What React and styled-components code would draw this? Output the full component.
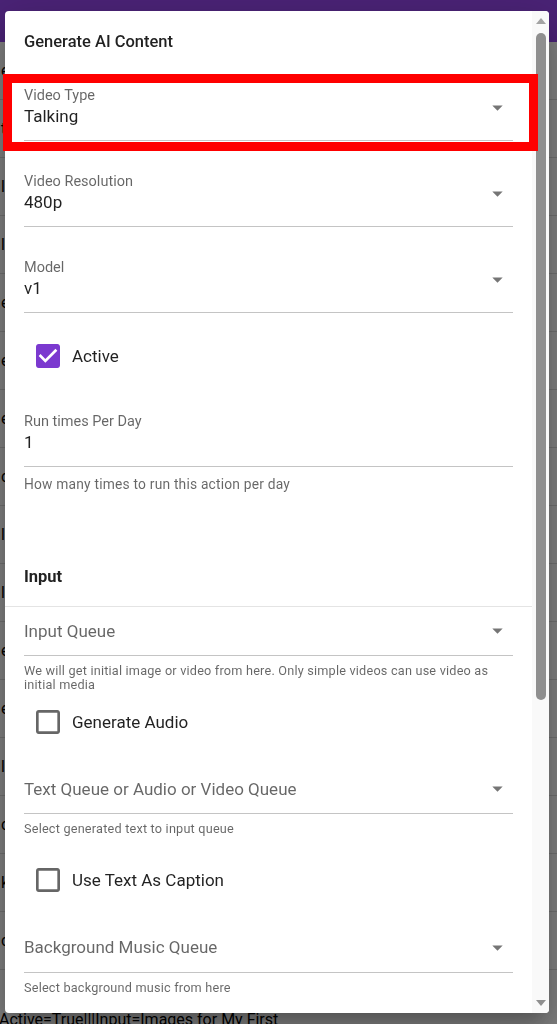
import React from "react";
import styled, { createGlobalStyle } from "styled-components";

const GlobalStyle = createGlobalStyle`
  * { box-sizing: border-box; }
  html, body { margin: 0; padding: 0; }
  body {
    font-family: Roboto, "Helvetica Neue", Arial, sans-serif;
    background: #fff;
    overflow: hidden;
  }
`;

/* ---------- page underneath the modal ---------- */
const Page = styled.div`
  width: 557px;
  height: 1024px;
  overflow: hidden;
  display: flex;
  flex-direction: column;
  background: #fff;
`;
const AppBar = styled.header`
  height: 42px;
  flex: none;
  background: #9546ec;
`;
const BgRows = styled.div`
  height: 968px;
  flex: none;
  display: flex;
  flex-direction: column;
  overflow: hidden;
`;
const BgRow = styled.div`
  height: 58px;
  flex: none;
  display: flex;
  align-items: center;
  border-bottom: 1px solid #dcdcdc;
  padding-left: 1px;
  font-size: 16px;
  color: #000;
  white-space: nowrap;
`;
const BgLine = styled.div`
  font-size: 16px;
  line-height: 20px;
  color: #000;
  white-space: nowrap;
  margin-left: -1px;
`;

/* ---------- modal ---------- */
const Backdrop = styled.div`
  position: fixed;
  inset: 0;
  background: rgba(0, 0, 0, 0.5);
`;
const Paper = styled.div`
  position: fixed;
  top: 11px;
  left: 5px;
  width: 544px;
  height: 1002px;
  display: flex;
  background: #fff;
  border-radius: 4px;
  overflow: hidden;
  box-shadow: 0 11px 15px -7px rgba(0, 0, 0, 0.2),
    0 24px 38px 3px rgba(0, 0, 0, 0.14), 0 9px 46px 8px rgba(0, 0, 0, 0.12);
`;
const Content = styled.div`
  width: 527px;
  flex: none;
  display: flex;
  flex-direction: column;
  overflow: hidden;
`;
const ScrollBar = styled.div`
  flex: 1;
  display: flex;
  flex-direction: column;
  align-items: center;
  padding: 7px 0 7px;
  background: #f9f9f9;
`;
const ScrollArrow = styled.svg`
  width: 10px;
  height: 6px;
  flex: none;
  fill: ${(p) => (p.$dim ? "#a3a3a3" : "#8f8f8f")};
`;
const ScrollThumb = styled.div`
  width: 10px;
  height: 667px;
  margin-top: 9px;
  flex: none;
  border-radius: 5px;
  background: #8f8f8f;
`;
const ScrollSpacer = styled.div`
  flex: 1;
`;

const Title = styled.h2`
  margin: 0;
  padding: 19px 19px 0;
  font-size: 16.5px;
  font-weight: 500;
  line-height: 24px;
  color: rgba(0, 0, 0, 0.87);
`;
const Section = styled.div`
  display: flex;
  flex-direction: column;
  padding: 0 19px;
`;
const SectionHeader = styled.h3`
  margin: ${(p) => p.$mt}px 0 0;
  padding: 0 19px 17px;
  font-size: 16.5px;
  font-weight: 700;
  line-height: 24px;
  color: rgba(0, 0, 0, 0.87);
  border-bottom: 1px solid #e4e4e4;
`;

const FieldBox = styled.div`
  margin-top: ${(p) => p.$mt}px;
  padding-bottom: 12px;
  border-bottom: 1px solid #c4c4c4;
`;
const FieldRow = styled.div`
  display: flex;
  align-items: center;
`;
const FieldText = styled.div`
  flex: 1;
  display: flex;
  flex-direction: column;
  min-width: 0;
`;
const Label = styled.div`
  font-size: 14.5px;
  line-height: 16px;
  margin-top: 1px;
  color: rgba(0, 0, 0, 0.6);
  white-space: nowrap;
`;
const Value = styled.div`
  font-size: 17px;
  line-height: 24px;
  color: ${(p) => (p.$placeholder ? "rgba(0,0,0,0.6)" : "rgba(0,0,0,0.87)")};
  white-space: nowrap;
`;
const Arrow = styled.svg`
  width: 25px;
  height: 25px;
  flex: none;
  margin-right: 3px;
  fill: rgba(0, 0, 0, 0.54);
`;
const Helper = styled.div`
  margin-top: ${(p) => (p.$large ? 9 : 8)}px;
  font-size: ${(p) => (p.$large ? 13.8 : 12.7)}px;
  line-height: ${(p) => (p.$large ? 16 : 13.5)}px;
  letter-spacing: 0.2px;
  color: rgba(0, 0, 0, 0.6);
`;

const CheckRow = styled.label`
  display: flex;
  align-items: center;
  gap: 12px;
  margin: ${(p) => p.$mt}px 0 0 12px;
  font-size: 17px;
  line-height: 24px;
  color: rgba(0, 0, 0, 0.87);
`;
const CheckIcon = styled.svg`
  width: 24px;
  height: 24px;
  flex: none;
  fill: ${(p) => (p.$checked ? "#7b39cf" : "rgba(0,0,0,0.6)")};
`;

const Annotation = styled.div`
  position: fixed;
  top: 74px;
  left: 3px;
  width: 535px;
  height: 77px;
  border: 9px solid #ff0000;
  pointer-events: none;
`;

function SelectField({ label, value, placeholder, helper, largeHelper, mt, noArrow }) {
  return (
    <>
      <FieldBox $mt={mt}>
        <FieldRow>
          <FieldText>
            {value != null && <Label>{label}</Label>}
            <Value $placeholder={value == null}>
              {value != null ? value : placeholder}
            </Value>
          </FieldText>
          {!noArrow && (
            <Arrow viewBox="0 0 24 24">
              <path d="M7 10l5 5 5-5z" />
            </Arrow>
          )}
        </FieldRow>
      </FieldBox>
      {helper && <Helper $large={largeHelper}>{helper}</Helper>}
    </>
  );
}

function Check({ checked, label, mt }) {
  return (
    <CheckRow $mt={mt}>
      <CheckIcon viewBox="3 3 18 18" $checked={checked}>
        {checked ? (
          <path d="M19 3H5c-1.11 0-2 .9-2 2v14c0 1.1.89 2 2 2h14c1.11 0 2-.9 2-2V5c0-1.1-.89-2-2-2zm-9 14l-5-5 1.41-1.41L10 14.17l7.59-7.59L19 8l-9 9z" />
        ) : (
          <path d="M19 5v14H5V5h14m0-2H5c-1.1 0-2 .9-2 2v14c0 1.1.9 2 2 2h14c1.1 0 2-.9 2-2V5c0-1.1-.9-2-2-2z" />
        )}
      </CheckIcon>
      {label}
    </CheckRow>
  );
}

const bgRows = ["e", "t", "l", "l", "el", "el", "el", "c", "l", "l", "el", "el", "l", "c", "k", "c"];

export default function App() {
  return (
    <>
      <GlobalStyle />
      <Page>
        <AppBar />
        <BgRows>
          {bgRows.map((t, i) => (
            <BgRow key={i}>{t}</BgRow>
          ))}
        </BgRows>
        <BgLine>Active=True|||Input=Images for My First</BgLine>
      </Page>
      <Backdrop />
      <Paper role="dialog">
        <Content>
          <Title>Generate AI Content</Title>
          <Section>
            <SelectField mt={33} label="Video Type" value="Talking" />
            <SelectField mt={32} label="Video Resolution" value="480p" />
            <SelectField mt={32} label="Model" value="v1" />
            <Check mt={31} checked label="Active" />
            <SelectField
              mt={45}
              label="Run times Per Day"
              value="1"
              noArrow
              largeHelper
              helper="How many times to run this action per day"
            />
          </Section>
          <SectionHeader $mt={73}>Input</SectionHeader>
          <Section>
            <SelectField
              mt={11}
              placeholder="Input Queue"
              helper={
                <>
                  We will get initial image or video from here. Only simple videos can use video as
                  <br />
                  initial media
                </>
              }
            />
            <Check mt={19} label="Generate Audio" />
            <SelectField
              mt={42}
              placeholder="Text Queue or Audio or Video Queue"
              helper="Select generated text to input queue"
            />
            <Check mt={32} label="Use Text As Caption" />
            <SelectField
              mt={43}
              placeholder="Background Music Queue"
              helper="Select background music from here"
            />
          </Section>
        </Content>
        <ScrollBar aria-hidden="true">
          <ScrollArrow viewBox="0 0 10 6" $dim>
            <path d="M0 6L5 0l5 6z" />
          </ScrollArrow>
          <ScrollThumb />
          <ScrollSpacer />
          <ScrollArrow viewBox="0 0 10 6">
            <path d="M0 0l5 6 5-6z" />
          </ScrollArrow>
        </ScrollBar>
      </Paper>
      <Annotation />
    </>
  );
}
